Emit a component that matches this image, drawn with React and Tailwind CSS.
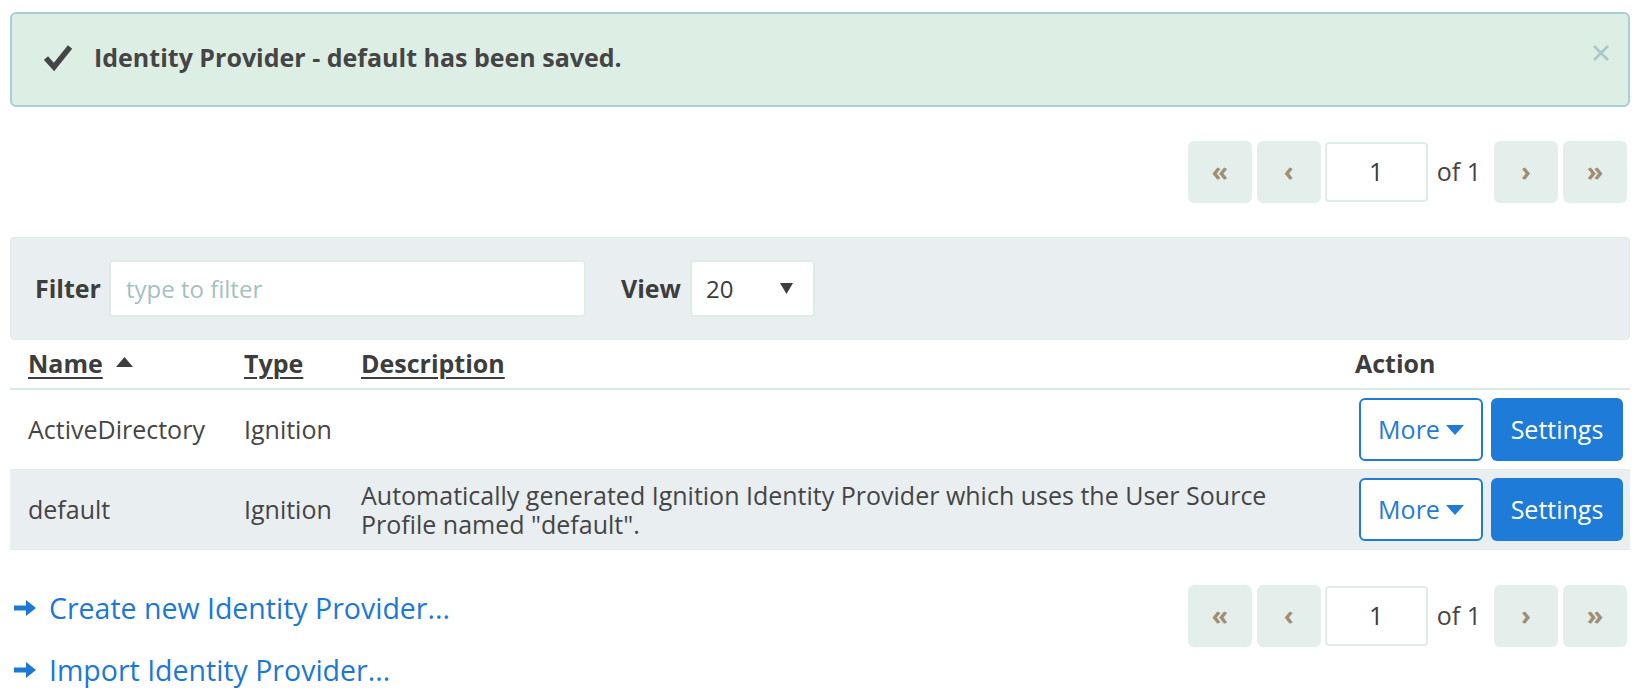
import React from 'react';

const Pager = () => (
  <div className="flex items-center mr-[3px]">
    <button className="w-[64px] h-[62px] rounded-md bg-[#e4efeb] text-[#a08d74] text-[27px] font-bold leading-none flex items-center justify-center pb-[3px]">«</button>
    <button className="ml-[5px] w-[64px] h-[62px] rounded-md bg-[#e4efeb] text-[#a08d74] text-[27px] font-bold leading-none flex items-center justify-center pb-[3px]">‹</button>
    <div className="ml-[4px] w-[103px] h-[60px] border-2 border-[#deeee6] rounded-sm bg-white flex items-center justify-center text-[25px] text-[#3c3c3c]">1</div>
    <span className="ml-[9px] mr-[13px] text-[25px] text-[#454545]">of 1</span>
    <button className="w-[64px] h-[62px] rounded-md bg-[#e4efeb] text-[#a08d74] text-[27px] font-bold leading-none flex items-center justify-center pb-[3px]">›</button>
    <button className="ml-[5px] w-[64px] h-[62px] rounded-md bg-[#e4efeb] text-[#a08d74] text-[27px] font-bold leading-none flex items-center justify-center pb-[3px]">»</button>
  </div>
);

const RowActions = () => (
  <div className="flex items-center justify-end gap-[8px] pr-[8px]">
    <button className="w-[124px] h-[63px] rounded-md border-2 border-[#1f7bd8] bg-white text-[#1f7bd8] text-[25px] flex items-center justify-center gap-[6px]">
      More
      <svg width="18" height="10" viewBox="0 0 18 10"><path d="M0 0 L18 0 L9 10 Z" fill="#1f7bd8" /></svg>
    </button>
    <button className="w-[132px] h-[63px] rounded-md bg-[#1f7bd8] text-white text-[25px] flex items-center justify-center">Settings</button>
  </div>
);

const Arrow = () => (
  <svg width="24" height="20" viewBox="0 0 24 20" className="shrink-0">
    <path d="M1 7.5 H13 V2 L23 10 L13 18 V12.5 H1 Z" fill="#1b78d4" />
  </svg>
);

export default function App() {
  const cols = 'grid grid-cols-[216px_117px_998px_290px]';
  return (
    <div className="w-[1643px] h-[698px] bg-white pl-[10px] pr-[13px] pt-[12px] font-['Open_Sans',sans-serif] text-[#454545] overflow-hidden">
      {/* saved alert */}
      <div className="h-[95px] border-2 border-[#a7cfd5] bg-[#ddefe5] rounded-md pl-[32px] pr-[17px] flex items-start">
        <svg width="28" height="28" viewBox="0 0 28 28" className="mt-[30px] shrink-0">
          <path d="M2 14 L10 23 L26 3" stroke="#454545" strokeWidth="5.5" fill="none" />
        </svg>
        <p className="ml-[22px] mt-[26px] flex-1 text-[25px] font-bold text-[#454545] leading-[34px]">Identity Provider - default has been saved.</p>
        <svg width="20" height="20" viewBox="0 0 20 20" className="mt-[29px] shrink-0">
          <path d="M3 3 L17 17 M17 3 L3 17" stroke="#a9c7cd" strokeWidth="2.5" />
        </svg>
      </div>

      <div className="mt-[34px] flex justify-end">
        <Pager />
      </div>

      {/* filter bar */}
      <div className="mt-[34px] h-[103px] bg-[#e9eef1] rounded-sm border border-[#e2ebe8] flex items-center pl-[24px]">
        <span className="text-[25px] font-bold text-[#3d3d3d]">Filter</span>
        <div className="ml-[8px] w-[477px] h-[57px] bg-white border-2 border-[#ddeee5] rounded-sm flex items-center pl-[15px] text-[24px] text-[#a6c0c2]">type to filter</div>
        <span className="ml-[35px] text-[25px] font-bold text-[#3d3d3d]">View</span>
        <div className="ml-[9px] w-[125px] h-[57px] bg-white border-2 border-[#ddeee5] rounded-sm flex items-center justify-between pl-[14px] pr-[20px] text-[24px] text-[#3d3d3d]">
          20
          <svg width="13" height="11" viewBox="0 0 13 11"><path d="M0 0 L13 0 L6.5 11 Z" fill="#3d3d3d" /></svg>
        </div>
      </div>

      {/* table */}
      <div className={`${cols} h-[50px] items-center border-b-2 border-[#d7ebe1] text-[25px] font-bold text-[#3d3d3d]`}>
        <div className="pl-[18px] flex items-center gap-[13px]">
          <span className="underline decoration-2 underline-offset-4">Name</span>
          <svg width="17" height="10" viewBox="0 0 17 10" className="-mt-[5px]"><path d="M0 10 L8.5 0 L17 10 Z" fill="#3d3d3d" /></svg>
        </div>
        <div className="pl-[18px]"><span className="underline decoration-2 underline-offset-4">Type</span></div>
        <div className="pl-[18px]"><span className="underline decoration-2 underline-offset-4">Description</span></div>
        <div className="pl-[14px]">Action</div>
      </div>
      <div className={`${cols} h-[80px] items-center border-b border-[#e3ece8] text-[25px]`}>
        <div className="pl-[18px]">ActiveDirectory</div>
        <div className="pl-[18px]">Ignition</div>
        <div className="pl-[18px]"></div>
        <RowActions />
      </div>
      <div className={`${cols} h-[80px] items-center bg-[#e9eef1] border-b border-[#dfece6] text-[25px]`}>
        <div className="pl-[18px]">default</div>
        <div className="pl-[18px]">Ignition</div>
        <div className="pl-[18px] pr-[30px] leading-[29px]">Automatically generated Ignition Identity Provider which uses the User Source Profile named "default".</div>
        <RowActions />
      </div>

      {/* links + bottom pager */}
      <div className="mt-[35px] flex justify-between items-start">
        <div className="flex flex-col pl-[3px] pt-[4px]">
          <a className="flex items-center gap-[12px] h-[38px] text-[28.5px] text-[#1b78d4]"><Arrow />Create new Identity Provider...</a>
          <a className="mt-[24px] flex items-center gap-[12px] h-[38px] text-[28.5px] text-[#1b78d4]"><Arrow />Import Identity Provider...</a>
        </div>
        <Pager />
      </div>
    </div>
  );
}
